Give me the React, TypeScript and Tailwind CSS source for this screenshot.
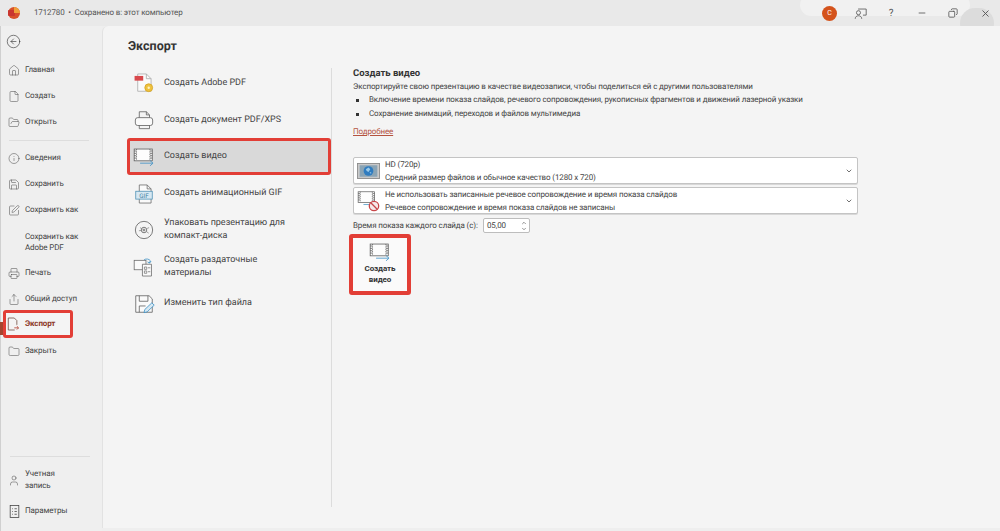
import { CircleArrowLeft, House, File, FolderOpen, Info, Save, SquarePen, Printer, Share, Folder, User, ChevronDown, ChevronUp, Minus, X, Copy } from "lucide-react";
import type { ReactNode } from "react";

const font = { fontFamily: 'Roboto, "Noto Sans", sans-serif' };

// Film frame with an arrow, used on the row, in the dropdown and on the button
const VideoIcon = ({ className = "" }: { className?: string }) => (
  <svg viewBox="0 0 28 24" className={className} fill="none">
    <rect x="1.5" y="2.5" width="23" height="15" fill="#fdfdfd" stroke="#5a5a5a" />
    <path d="M1.5 5h3M1.5 8h3M1.5 11h3M1.5 14h3M21.5 5h3M21.5 8h3M21.5 11h3M21.5 14h3" stroke="#5a5a5a" />
    <path d="M4.5 2.5v15M21.5 2.5v15" stroke="#5a5a5a" strokeDasharray="1.5 1.5" />
    <path d="M9 20.5h16M21.5 17l4 3.5-4 3.5" stroke="#3a8fc4" strokeWidth="1" />
  </svg>
);

const PdfIcon = () => (
  <svg viewBox="0 0 28 28" className="w-[24px] h-[24px]" fill="none">
    <path d="M6 2.5h11l6 6v16H6z" fill="#fafafa" stroke="#a8a8a8" />
    <path d="M17 2.5v6h6" stroke="#a8a8a8" />
    <rect x="2" y="5" width="11" height="6" fill="#d8484c" />
    <circle cx="20" cy="20" r="5" fill="#eec23e" stroke="#d5a326" />
    <circle cx="20" cy="20" r="1.5" fill="#fff3c4" />
  </svg>
);

const XpsIcon = () => (
  <svg viewBox="0 0 28 28" className="w-[24px] h-[24px]" fill="none" stroke="#5c5c5c">
    <path d="M8 11V3.5h9l4 4V11" />
    <path d="M17 3.5v4h4" />
    <rect x="3" y="11" width="22" height="10" rx="3" fill="#fafafa" />
    <path d="M8 21v4h13v-4" />
  </svg>
);

const GifIcon = () => (
  <svg viewBox="0 0 28 28" className="w-[24px] h-[24px]" fill="none">
    <path d="M8 2.5h10l5 5v18H8z" fill="#fafafa" stroke="#6a6a6a" />
    <path d="M18 2.5v5h5" stroke="#6a6a6a" />
    <rect x="3.5" y="10.5" width="21" height="10" fill="#d7e8f2" stroke="#4f91b5" />
    <text x="14" y="18.5" textAnchor="middle" fontSize="8" fill="#3f7fa3" fontFamily="Roboto, sans-serif">GIF</text>
  </svg>
);

const DiscIcon = () => (
  <svg viewBox="0 0 28 28" className="w-[24px] h-[24px]" fill="none" stroke="#5c5c5c">
    <circle cx="14" cy="14" r="11" />
    <circle cx="14" cy="14" r="3.5" />
    <circle cx="14" cy="14" r="1.2" />
    <path d="M9 11l3 2M7.5 15l3-.5M17 16l3 2M18 12l2.5-1" stroke="#8a8a8a" />
  </svg>
);

const HandoutIcon = () => (
  <svg viewBox="0 0 28 28" className="w-[24px] h-[24px]" fill="none">
    <rect x="1.5" y="5.5" width="15" height="12" fill="#fafafa" stroke="#6a6a6a" />
    <path d="M12 10.5h11.5v15H12z" fill="#fafafa" stroke="#6a6a6a" />
    <path d="M14.5 14h3v3h-3zM14.5 19h3v3h-3zM19 15h3M19 20h3" stroke="#7a7a7a" />
    <path d="M14 5a5 4 0 0 1 8 1l-1 3M23 6.5L21 9l-2.500-1.500" stroke="#3a8fc4" />
  </svg>
);

const FileTypeIcon = () => (
  <svg viewBox="0 0 28 28" className="w-[24px] h-[24px]" fill="none">
    <path d="M3.500 3.500h17l4 4v17h-21z" fill="#fafafa" stroke="#5c5c5c" />
    <path d="M8 3.500v7h11v-7M8 24.500v-8h8" stroke="#5c5c5c" />
    <path d="M14 25l1-4 9-8.500 3 3-9 8.500z" fill="#d7e8f2" stroke="#3a8fc4" />
  </svg>
);

const HdIcon = () => (
  <svg viewBox="0 0 26 20" className="w-[23px] h-[18px]" fill="none">
    <rect x="0.500" y="1.500" width="25" height="17" fill="#c9c9c9" stroke="#8a8a8a" />
    <rect x="3" y="3.500" width="20" height="13" fill="#8aa4b5" />
    <circle cx="13" cy="10" r="5.500" fill="#2f7cc0" />
    <path d="M10 8l3-2 2 2-2 3-2-1zM14 12l2-1 0 2z" fill="#9ccbe9" />
  </svg>
);

const NoRecordIcon = () => (
  <div className="relative w-[23px] h-[22px] shrink-0">
    <VideoIcon className="w-[20px] h-[17px]" />
    <svg viewBox="0 0 14 14" className="absolute right-0 bottom-0 w-[12px] h-[12px]" fill="#f6e9e9" stroke="#c8474a" strokeWidth="1.500">
      <circle cx="7" cy="7" r="5.500" />
      <path d="M3 3l8 8" />
    </svg>
  </div>
);

const OptionsIcon = () => (
  <svg viewBox="0 0 14 16" className="w-[11px] h-[13px]" fill="none" stroke="#444">
    <rect x="1.500" y="0.500" width="11" height="15" />
    <path d="M4 4.500h1M7 4.500h3M4 8h1M7 8h3M4 11.500h1M7 11.500h3" />
  </svg>
);

const ExportIcon = () => (
  <svg viewBox="0 0 14 16" className="w-[12px] h-[14px]" fill="none" stroke="#7a5a50">
    <path d="M9 15H1.500V1h7l3 3v5" />
    <path d="M8.500 12.500h5M11.500 10.500l2 2-2 2" stroke="#b5483a" />
  </svg>
);

const side = "w-[13px] h-[13px]";

const NavItem = ({ icon, label }: { icon: ReactNode; label: ReactNode }) => (
  <div className="h-[26px] flex items-center pl-[7px] gap-[5px] leading-[12px]">
    <span className="w-[12px] flex justify-center shrink-0">{icon}</span>
    <span>{label}</span>
  </div>
);

const ExportRow = ({ icon, children, active = false }: { icon: ReactNode; children: ReactNode; active?: boolean }) => (
  <div
    className={
      active
        ? "h-[37px] -ml-[1px] flex items-center gap-[9px] pl-[3px] bg-[#d9d9d9] border-[3px] border-[#e23e36] rounded-[3px]"
        : "h-[36.700px] flex items-center gap-[9px] pl-[5px] pr-[4px]"
    }
  >
    <span className="w-[22px] flex justify-center shrink-0">{icon}</span>
    <span className="leading-[13px]">{children}</span>
  </div>
);

const Select = ({ icon, top, bottom }: { icon: ReactNode; top: string; bottom: string }) => (
  <div className="h-[27px] flex items-center bg-white border border-[#c4c4c4] rounded-[2px] pl-[2px] pr-[4px] gap-[5px] shadow-[0_1px_0_#d8d8d8]">
    <span className="w-[24px] flex justify-center shrink-0">{icon}</span>
    <div className="flex-1 leading-[13px]">
      <div>{top}</div>
      <div>{bottom}</div>
    </div>
    <ChevronDown className="w-[8px] h-[8px] text-[#555]" strokeWidth={2.500} />
  </div>
);

export default function App() {
  return (
    <div style={font} className="w-[1000px] h-[531px] overflow-hidden flex flex-col bg-[#eeeeee] text-[#444444] text-[8px] tracking-[-0.13px] [text-rendering:geometricPrecision]">
      {/* Title bar */}
      <header className="relative h-[26px] shrink-0 flex items-center bg-[#e9e9e9] overflow-hidden">
        <div className="absolute -top-[6px] left-[800px] w-[170px] h-[22px] rounded-full bg-[#f1f1f1]" />
        <div className="absolute top-[8px] left-[960px] w-[34px] h-[30px] rounded-full bg-[#dcdcdc]" />
        <div className="relative pl-[8px] flex items-center w-[34px]">
          <div className="relative w-[12px] h-[12px] rounded-full bg-[#d8502a]">
            <div className="absolute left-0 top-[3px] w-[7px] h-[6px] bg-[#c9352e] rounded-[1px]" />
            <div className="absolute right-0 top-0 w-[6px] h-[6px] rounded-tr-full bg-[#f0a03a]" />
          </div>
        </div>
        <span className="relative text-[#555]">1712780 &nbsp;•&nbsp; Сохранено в: этот компьютер</span>
        <div className="relative ml-auto flex items-center text-[#555]">
          <div className="w-[15px] h-[15px] rounded-full bg-[#d4531c] text-white text-[7px] flex items-center justify-center mr-[17px]">С</div>
          <svg viewBox="0 0 16 16" className="w-[13px] h-[13px] mr-[19px]" fill="none" stroke="#555">
            <path d="M5 2.500h10v7.500h-4" />
            <circle cx="5.500" cy="7" r="2.500" />
            <path d="M1.500 14.500c0-5 8-5 8 0" />
          </svg>
          <span className="w-[10px] mr-[21px] text-center text-[10px]">?</span>
          <Minus className="w-[10px] h-[10px] mr-[21px]" />
          <Copy className="w-[10px] h-[10px] mr-[22px] -scale-x-100" />
          <X className="w-[11px] h-[11px] mr-[9px]" />
        </div>
      </header>

      <div className="flex-1 flex min-h-0">
        {/* Backstage navigation */}
        <aside className="w-[102px] shrink-0 flex flex-col bg-[#efefef] border-l border-[#d0d0d0]">
          <div className="h-[31px] flex items-center pl-[5px]">
            <CircleArrowLeft className="w-[15px] h-[15px] text-[#333]" strokeWidth={1} />
          </div>
          <NavItem icon={<House className={side} strokeWidth={1} />} label="Главная" />
          <NavItem icon={<File className={side} strokeWidth={1} />} label="Создать" />
          <NavItem icon={<FolderOpen className={side} strokeWidth={1} />} label="Открыть" />
          <div className="h-[10px] flex items-center pl-[8px] pr-[13px]">
            <div className="w-full h-px bg-[#dddddd]" />
          </div>
          <NavItem icon={<Info className={side} strokeWidth={1} />} label="Сведения" />
          <NavItem icon={<Save className={side} strokeWidth={1} />} label="Сохранить" />
          <NavItem icon={<SquarePen className={side} strokeWidth={1} />} label="Сохранить как" />
          <div className="h-[37px] flex items-center pl-[24px] leading-[11px]">
            <span>Сохранить как<br />Adobe PDF</span>
          </div>
          <NavItem icon={<Printer className={side} strokeWidth={1} />} label="Печать" />
          <NavItem icon={<Share className={side} strokeWidth={1} />} label="Общий доступ" />
          <div className="relative h-[26px]">
            <div className="absolute top-[10px] -left-px w-[3px] h-[13px] bg-[#a5452f]" />
            <div className="absolute -top-[2px] left-[2px] w-[70px] h-[28px] bg-[#f4f4f4] border-[3px] border-[#e23e36] rounded-[3px] flex items-center pl-[1px] gap-[6px] font-bold text-[#8e3a2a]">
              <span className="w-[12px] flex justify-center shrink-0"><ExportIcon /></span>
              <span>Экспорт</span>
            </div>
          </div>
          <NavItem icon={<Folder className={side} strokeWidth={1} />} label="Закрыть" />
          <div className="flex-1" />
          <div className="h-px bg-[#dddddd] ml-[9px] mr-[12px] mb-[10px]" />
          <NavItem icon={<User className={side} strokeWidth={1} />} label={<>Учетная<br />запись</>} />
          <div className="h-[5px]" />
          <NavItem icon={<OptionsIcon />} label="Параметры" />
          <div className="h-[7px]" />
        </aside>

        {/* Export panel */}
        <main className="flex-1 flex bg-[#f4f4f4] border-l border-[#e2e2e2] rounded-tl-[6px] mb-[3px] min-w-0">
          <section className="w-[229px] shrink-0 pl-[25px] pt-[13px] tracking-normal">
            <h1 className="text-[12.500px] font-bold text-[#333] leading-[16px]">Экспорт</h1>
            <div className="flex mt-[10px] h-[442px]">
              <div className="w-[203px] shrink-0 text-[9px]">
                <ExportRow icon={<PdfIcon />}>Создать Adobe PDF</ExportRow>
                <ExportRow icon={<XpsIcon />}>Создать документ PDF/XPS</ExportRow>
                <ExportRow active icon={<VideoIcon className="w-[22px] h-[19px]" />}>Создать видео</ExportRow>
                <ExportRow icon={<GifIcon />}>Создать анимационный GIF</ExportRow>
                <ExportRow icon={<DiscIcon />}>Упаковать презентацию для<br />компакт-диска</ExportRow>
                <ExportRow icon={<HandoutIcon />}>Создать раздаточные<br />материалы</ExportRow>
                <ExportRow icon={<FileTypeIcon />}>Изменить тип файла</ExportRow>
              </div>
              <div className="w-px bg-[#dcdcdc] mt-[3px]" />
            </div>
          </section>

          <section className="w-[505px] ml-[21px] pt-[41px]">
            <h2 className="font-bold text-[9.500px] tracking-normal text-[#333] leading-[13px]">Создать видео</h2>
            <p className="leading-[13px] whitespace-nowrap">Экспортируйте свою презентацию в качестве видеозаписи, чтобы поделиться ей с другими пользователями</p>
            <ul>
              <li className="h-[14px] flex items-center whitespace-nowrap">
                <span className="w-[3px] h-[3px] bg-[#333] ml-[3px] mr-[10px]" />
                Включение времени показа слайдов, речевого сопровождения, рукописных фрагментов и движений лазерной указки
              </li>
              <li className="h-[14px] flex items-center whitespace-nowrap">
                <span className="w-[3px] h-[3px] bg-[#333] ml-[3px] mr-[10px]" />
                Сохранение анимаций, переходов и файлов мультимедиа
              </li>
            </ul>
            <a className="block mt-[4px] leading-[13px] underline text-[#b5533f]">Подробнее</a>

            <div className="mt-[19px] flex flex-col gap-[3px]">
              <Select icon={<HdIcon />} top="HD (720p)" bottom="Средний размер файлов и обычное качество (1280 x 720)" />
              <Select
                icon={<NoRecordIcon />}
                top="Не использовать записанные речевое сопровождение и время показа слайдов"
                bottom="Речевое сопровождение и время показа слайдов не записаны"
              />
            </div>

            <div className="mt-[4px] h-[15px] flex items-center">
              <span className="w-[130px] whitespace-nowrap">Время показа каждого слайда (с):</span>
              <div className="w-[47px] h-[15px] bg-white border border-[#bdbdbd] rounded-[2px] flex items-center justify-between pl-[3px] pr-[2px]">
                <span>05,00</span>
                <span className="flex flex-col text-[#555]">
                  <ChevronUp className="w-[6px] h-[6px]" strokeWidth={2.500} />
                  <ChevronDown className="w-[6px] h-[6px]" strokeWidth={2.500} />
                </span>
              </div>
            </div>

            <button className="mt-px -ml-[4px] w-[62px] h-[61px] bg-[#fafafa] border-[4px] border-[#e23e36] rounded-[3px] flex flex-col items-center justify-start pt-[4px] font-bold text-[#333] leading-[11px]">
              <VideoIcon className="w-[22px] h-[19px] mb-[2px]" />
              <span>Создать<br />видео</span>
            </button>
          </section>
        </main>
      </div>
    </div>
  );
}
